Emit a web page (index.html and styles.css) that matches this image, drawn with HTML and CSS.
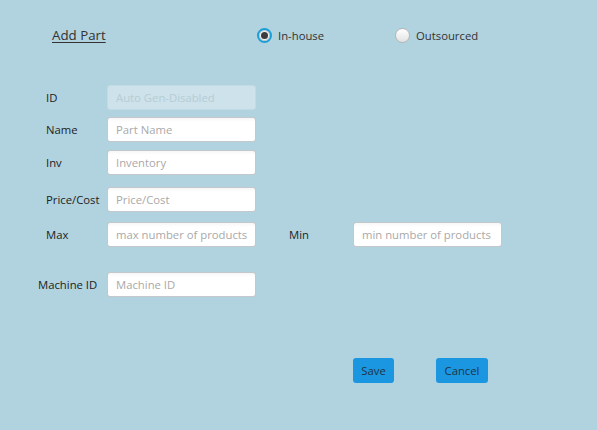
FILE: index.html
```html
<!DOCTYPE html>
<html>
<head>
<meta charset="utf-8">
<link rel="stylesheet" href="styles.css">
</head>
<body>
<div class="page">
  <header class="top">
    <span class="title">Add Part</span>
    <label class="radio"><span class="circle on"><span class="dot"></span></span>In-house</label>
    <label class="radio"><span class="circle"></span>Outsourced</label>
  </header>

  <div class="form">
    <div class="row r-id">
      <span class="lbl">ID</span>
      <span class="field disabled">Auto Gen-Disabled</span>
    </div>
    <div class="row r-name">
      <span class="lbl">Name</span>
      <span class="field">Part Name</span>
    </div>
    <div class="row r-inv">
      <span class="lbl">Inv</span>
      <span class="field">Inventory</span>
    </div>
    <div class="row r-price">
      <span class="lbl">Price/Cost</span>
      <span class="field">Price/Cost</span>
    </div>
    <div class="row r-max">
      <span class="lbl">Max</span>
      <span class="field">max number of products</span>
      <span class="lbl lbl-min">Min</span>
      <span class="field">min number of products</span>
    </div>
    <div class="row r-machine">
      <span class="lbl lbl-wide">Machine ID</span>
      <span class="field">Machine ID</span>
    </div>
  </div>

  <div class="actions">
    <button class="btn btn-save">Save</button>
    <button class="btn btn-cancel">Cancel</button>
  </div>
</div>
</body>
</html>
```
FILE: styles.css
```css
html, body {
  margin: 0;
  padding: 0;
}
body {
  width: 597px;
  height: 430px;
  background: #b1d2df;
  font-family: "Open Sans", "Noto Sans", sans-serif;
  font-size: 11.3px;
  color: #222;
  overflow: hidden;
}
.page {
  display: flex;
  flex-direction: column;
}
.top {
  display: flex;
  align-items: center;
  height: 14px;
  margin-top: 28px;
  padding-left: 52px;
}
.title {
  width: 205px;
  font-size: 13.3px;
  color: #333;
  text-decoration: underline;
  text-underline-offset: 2px;
}
.radio {
  display: flex;
  align-items: center;
  gap: 6px;
  color: #333;
}
.radio:first-of-type {
  width: 138px;
}
.circle {
  box-sizing: border-box;
  width: 15px;
  height: 15px;
  border-radius: 50%;
  border: 1px solid #b5b5b5;
  background: linear-gradient(#ffffff, #e2e2e2);
  display: flex;
  align-items: center;
  justify-content: center;
}
.circle.on {
  border: 2px solid #1a9fd8;
  background: #f2f2f2;
  box-shadow: inset 0 0 0 1px #c8c8c8;
}
.dot {
  width: 7px;
  height: 7px;
  border-radius: 50%;
  background: #3c3c3c;
}
.form {
  display: flex;
  flex-direction: column;
  padding-left: 46px;
  margin-top: 43px;
}
.row {
  display: flex;
  align-items: center;
  height: 25px;
}
.r-name { margin-top: 7px; }
.r-inv { margin-top: 8px; }
.r-price { margin-top: 12px; }
.r-max { margin-top: 10px; }
.r-machine { margin-top: 25px; }
.lbl {
  width: 61px;
  flex: none;
  color: #222;
  white-space: nowrap;
}
.lbl-wide {
  margin-left: -8px;
  width: 69px;
}
.lbl-min {
  margin-left: 33px;
  width: 64px;
}
.field {
  box-sizing: border-box;
  width: 149px;
  height: 25px;
  flex: none;
  display: flex;
  align-items: center;
  padding-left: 8px;
  background: linear-gradient(#f6f6f6, #ffffff 4px);
  border: 1px solid #c4c8ca;
  border-radius: 3px;
  color: #a9a9a9;
  white-space: nowrap;
  overflow: hidden;
}
.field.disabled {
  background: #cde2ea;
  border-color: #c2dae3;
  color: #b6cdd6;
}
.actions {
  display: flex;
  padding-left: 353px;
  margin-top: 61px;
  gap: 42px;
}
.btn {
  box-sizing: border-box;
  height: 25px;
  border: none;
  border-radius: 3px;
  background: #1b97e2;
  color: #1f3342;
  font-family: "Open Sans", "Noto Sans", sans-serif;
  font-size: 11.3px;
  padding: 0;
}
.btn-save { width: 41px; }
.btn-cancel { width: 52px; }
```
